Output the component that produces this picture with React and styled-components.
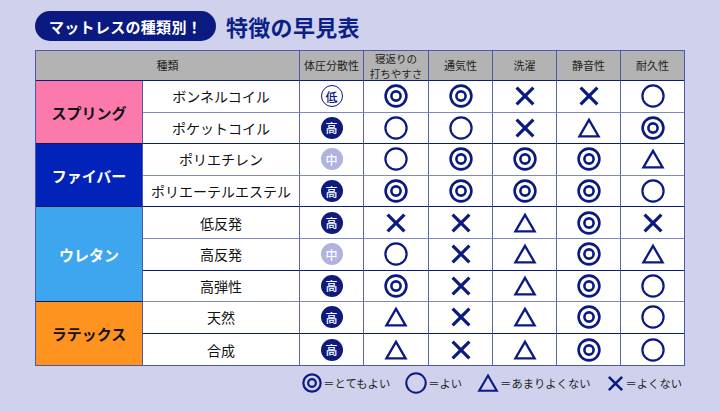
import React from "react";
import styled, { createGlobalStyle } from "styled-components";

const GlobalStyle = createGlobalStyle`
  html, body {
    margin: 0;
    padding: 0;
    background: #d0d2ed;
  }
  body {
    font-family: "Noto Sans CJK JP", "Noto Sans", sans-serif;
  }
`;

const NAVY = "#0b1a82";

const Page = styled.div`
  width: 720px;
  height: 411px;
  box-sizing: border-box;
  padding: 11px 35px 0 35px;
  background: #d0d2ed;
  display: flex;
  flex-direction: column;
`;

const TitleRow = styled.div`
  display: flex;
  align-items: center;
  gap: 10px;
  height: 30px;
  margin-bottom: 9px;
`;

const Pill = styled.div`
  height: 30px;
  padding: 0 14px;
  border-radius: 15px;
  background: #0a1a80;
  color: #fff;
  font-size: 15px;
  font-weight: 700;
  display: flex;
  align-items: center;
  letter-spacing: 0.3px;
`;

const Heading = styled.h1`
  margin: 0;
  font-size: 22px;
  font-weight: 700;
  color: #0c1f86;
  letter-spacing: 0.3px;
`;

const Table = styled.div`
  display: grid;
  grid-template-columns: 107px 157px 64px 65px 64px 64px 64px 63px;
  grid-template-rows: 30px repeat(9, 31.6px);
  width: 650px;
  box-sizing: border-box;
  border: 1px solid #4e58aa;
  background: #fff;
`;

const HeadCell = styled.div`
  grid-column: span ${(p) => p.span || 1};
  background: #b3b3b3;
  border-right: ${(p) => (p.last ? "none" : "1px solid #4e58aa")};
  border-bottom: 1px solid ${NAVY};
  box-sizing: border-box;
  display: flex;
  flex-direction: column;
  align-items: center;
  justify-content: center;
  text-align: center;
  font-size: ${(p) => (p.tight ? "10.5px" : "11px")};
  line-height: ${(p) => (p.tight ? "15px" : "13px")};
  color: #222;
`;

const Category = styled.div`
  grid-row: span ${(p) => p.rows};
  background: ${(p) => p.bg};
  color: ${(p) => p.fg};
  border-right: 1px solid #4e58aa;
  border-bottom: ${(p) => (p.end ? "none" : "1px solid #111a4a")};
  box-sizing: border-box;
  display: flex;
  align-items: center;
  justify-content: center;
  font-size: 15px;
  font-weight: 700;
`;

const Cell = styled.div`
  background: #fff;
  border-right: ${(p) => (p.last ? "none" : "1px solid #5a63b3")};
  border-bottom: ${(p) => (p.end ? "none" : `1px solid ${p.soft ? "#7f87c6" : NAVY}`)};
  box-sizing: border-box;
  display: flex;
  align-items: center;
  justify-content: center;
  font-size: 14px;
  color: #111;
`;

const Badge = styled.span`
  width: 22px;
  height: 22px;
  border-radius: 50%;
  box-sizing: border-box;
  display: flex;
  align-items: center;
  justify-content: center;
  font-size: 12px;
  font-weight: 500;
  background: ${(p) => (p.level === "高" ? "#0d1b7c" : p.level === "中" ? "#b0b3e0" : "#fff")};
  color: ${(p) => (p.level === "低" ? NAVY : "#fff")};
  border: ${(p) => (p.level === "低" ? `1.3px solid ${NAVY}` : "none")};
`;

const Legend = styled.div`
  display: flex;
  justify-content: flex-end;
  align-items: center;
  gap: 15px;
  margin-top: 6px;
  padding-right: 3px;
`;

const LegendItem = styled.div`
  display: flex;
  align-items: center;
  gap: 1px;
  font-size: 11.3px;
  color: #222;
`;

const Mark = ({ type, size = 24 }) => {
  const common = { width: size, height: size, viewBox: "0 0 24 24", fill: "none", stroke: NAVY };
  if (type === "◎")
    return (
      <svg {...common} strokeWidth="2.6">
        <circle cx="12" cy="12" r="10.4" />
        <circle cx="12" cy="12" r="4.6" />
      </svg>
    );
  if (type === "○")
    return (
      <svg {...common} strokeWidth="2.2">
        <circle cx="12" cy="12" r="10.6" />
      </svg>
    );
  if (type === "△")
    return (
      <svg {...common} strokeWidth="2.3" strokeLinejoin="miter">
        <path d="M12 3.8 L21.6 20.4 H2.4 Z" />
      </svg>
    );
  return (
    <svg {...common} strokeWidth="3.2">
      <path d="M3.6 3.6 L20.4 20.4 M20.4 3.6 L3.6 20.4" />
    </svg>
  );
};

const groups = [
  {
    name: "スプリング",
    bg: "#fc7aab",
    fg: "#111",
    rows: [
      ["ボンネルコイル", "低", "◎◎✕✕○"],
      ["ポケットコイル", "高", "○○✕△◎"],
    ],
  },
  {
    name: "ファイバー",
    bg: "#0223b9",
    fg: "#fff",
    rows: [
      ["ポリエチレン", "中", "○◎◎◎△"],
      ["ポリエーテルエステル", "高", "◎◎◎◎○"],
    ],
  },
  {
    name: "ウレタン",
    bg: "#3ea5ef",
    fg: "#fff",
    rows: [
      ["低反発", "高", "✕✕△◎✕"],
      ["高反発", "中", "○✕△◎△"],
      ["高弾性", "高", "◎✕△◎○"],
    ],
  },
  {
    name: "ラテックス",
    bg: "#fe9320",
    fg: "#111",
    rows: [
      ["天然", "高", "△✕△◎○"],
      ["合成", "高", "△✕△◎○"],
    ],
  },
];

const headers = ["体圧分散性", "寝返りの\n打ちやすさ", "通気性", "洗濯", "静音性", "耐久性"];

export default function App() {
  let rowIndex = 0;
  return (
    <>
      <GlobalStyle />
      <Page>
        <TitleRow>
          <Pill>マットレスの種類別！</Pill>
          <Heading>特徴の早見表</Heading>
        </TitleRow>
        <Table>
          <HeadCell span={2}>種類</HeadCell>
          {headers.map((h, i) => {
            const lines = h.split("\n");
            return (
              <HeadCell key={h} last={i === headers.length - 1} tight={lines.length > 1}>
                {lines.map((line) => (
                  <span key={line}>{line}</span>
                ))}
              </HeadCell>
            );
          })}
          {groups.map((g, gi) => (
            <React.Fragment key={g.name}>
              {g.rows.map((r, ri) => {
                const idx = rowIndex++;
                const end = idx === 8;
                const soft = idx % 2 === 0;
                return (
                  <React.Fragment key={r[0]}>
                    {ri === 0 && (
                      <Category rows={g.rows.length} bg={g.bg} fg={g.fg} end={gi === groups.length - 1}>
                        {g.name}
                      </Category>
                    )}
                    <Cell end={end} soft={soft}>{r[0]}</Cell>
                    <Cell end={end} soft={soft}>
                      <Badge level={r[1]}>{r[1]}</Badge>
                    </Cell>
                    {[...r[2]].map((m, mi) => (
                      <Cell key={mi} end={end} soft={soft} last={mi === 4}>
                        <Mark type={m} />
                      </Cell>
                    ))}
                  </React.Fragment>
                );
              })}
            </React.Fragment>
          ))}
        </Table>
        <Legend>
          <LegendItem>
            <Mark type="◎" size={20} />＝とてもよい
          </LegendItem>
          <LegendItem>
            <Mark type="○" size={22} />＝よい
          </LegendItem>
          <LegendItem>
            <Mark type="△" size={22} />＝あまりよくない
          </LegendItem>
          <LegendItem>
            <Mark type="✕" size={19} />＝よくない
          </LegendItem>
        </Legend>
      </Page>
    </>
  );
}
